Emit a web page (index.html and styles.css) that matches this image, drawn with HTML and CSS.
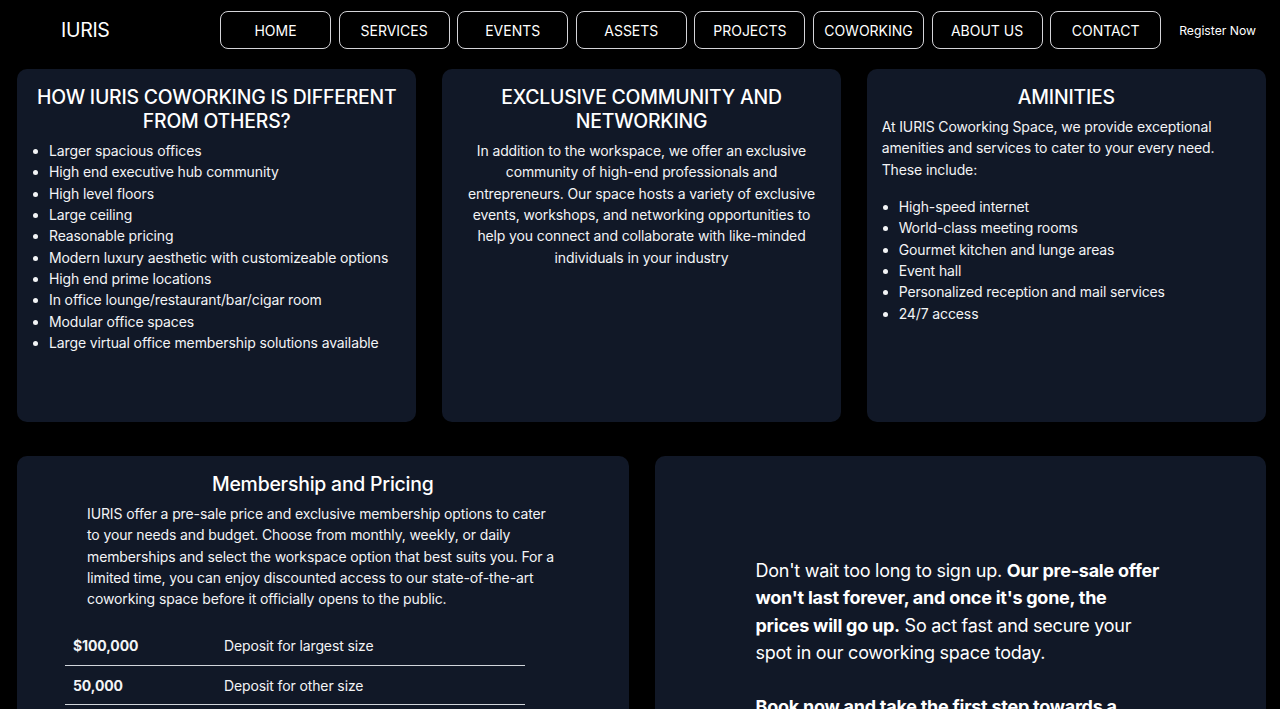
FILE: index.html
```html
<!DOCTYPE html>
<html lang="en">
<head>
<meta charset="utf-8">
<title>IURIS Coworking</title>
<link rel="stylesheet" href="styles.css">
</head>
<body>
<header class="topbar">
  <div class="logo">IURIS</div>
  <nav class="nav">
    <a class="nav-btn" href="#">HOME</a>
    <a class="nav-btn" href="#">SERVICES</a>
    <a class="nav-btn" href="#">EVENTS</a>
    <a class="nav-btn" href="#">ASSETS</a>
    <a class="nav-btn" href="#">PROJECTS</a>
    <a class="nav-btn" href="#">COWORKING</a>
    <a class="nav-btn" href="#">ABOUT US</a>
    <a class="nav-btn" href="#">CONTACT</a>
  </nav>
  <a class="register" href="#">Register Now</a>
</header>

<main class="main">
  <section class="row-three">
    <article class="card">
      <h2 class="card-title">HOW IURIS COWORKING IS DIFFERENT FROM OTHERS?</h2>
      <ul class="list">
        <li>Larger spacious offices</li>
        <li>High end executive hub community</li>
        <li>High level floors</li>
        <li>Large ceiling</li>
        <li>Reasonable pricing</li>
        <li>Modern luxury aesthetic with customizeable options</li>
        <li>High end prime locations</li>
        <li>In office lounge/restaurant/bar/cigar room</li>
        <li>Modular office spaces</li>
        <li>Large virtual office membership solutions available</li>
      </ul>
    </article>
    <article class="card">
      <h2 class="card-title">EXCLUSIVE COMMUNITY AND NETWORKING</h2>
      <p class="text center narrow">In addition to the workspace, we offer an exclusive community of high-end professionals and entrepreneurs. Our space hosts a variety of exclusive events, workshops, and networking opportunities to help you connect and collaborate with like-minded individuals in your industry</p>
    </article>
    <article class="card">
      <h2 class="card-title">AMINITIES</h2>
      <p class="text">At IURIS Coworking Space, we provide exceptional amenities and services to cater to your every need. These include:</p>
      <ul class="list list-gap">
        <li>High-speed internet</li>
        <li>World-class meeting rooms</li>
        <li>Gourmet kitchen and lunge areas</li>
        <li>Event hall</li>
        <li>Personalized reception and mail services</li>
        <li>24/7 access</li>
      </ul>
    </article>
  </section>

  <section class="row-two">
    <article class="card card-tall">
      <h2 class="card-title">Membership and Pricing</h2>
      <p class="text pricing-text">IURIS offer a pre-sale price and exclusive membership options to cater to your needs and budget. Choose from monthly, weekly, or daily memberships and select the workspace option that best suits you. For a limited time, you can enjoy discounted access to our state-of-the-art coworking space before it officially opens to the public.</p>
      <table class="price-table">
        <tr><td class="price">$100,000</td><td>Deposit for largest size</td></tr>
        <tr><td class="price">50,000</td><td>Deposit for other size</td></tr>
        <tr><td class="price">25,000</td><td>Deposit for smaller size</td></tr>
      </table>
    </article>
    <article class="card card-tall promo">
      <p class="promo-text">Don't wait too long to sign up. <strong>Our pre-sale offer won't last forever, and once it's gone, the prices will go up.</strong> So act fast and secure your spot in our coworking space today.</p>
      <p class="promo-text"><strong>Book now and take the first step towards a more productive and successful future.</strong></p>
    </article>
  </section>
</main>
</body>
</html>
```

FILE: styles.css
```css
* { box-sizing: border-box; }

html, body {
  margin: 0;
  padding: 0;
  background: #000;
  color: #f3f4f6;
  font-family: Inter, "Noto Sans", "Liberation Sans", sans-serif;
}

.topbar {
  display: flex;
  align-items: center;
  height: 60px;
  padding-left: 61px;
}

.logo {
  width: 159px;
  font-size: 19.5px;
  color: #fff;
  letter-spacing: -0.3px;
}

.nav {
  display: flex;
  gap: 7.6px;
}

.nav-btn {
  width: 111px;
  height: 38px;
  display: flex;
  align-items: center;
  justify-content: center;
  border: 1px solid #d4d4d8;
  border-radius: 8px;
  color: #fff;
  text-decoration: none;
  font-size: 14px;
}

.register {
  margin-left: 18px;
  color: #fff;
  text-decoration: none;
  font-size: 12.2px;
}

.main {
  padding: 9px 14px 0 17px;
}

.row-three {
  display: grid;
  grid-template-columns: repeat(3, 1fr);
  gap: 25.5px;
}

.row-two {
  display: grid;
  grid-template-columns: 1fr 1fr;
  gap: 26px;
  margin-top: 34px;
}

.card {
  background: #111827;
  border-radius: 10px;
  padding: 16px 15px;
  height: 353px;
}

.card-tall {
  height: 300px;
}

.card-title {
  margin: 0 0 7px;
  font-size: 19.4px;
  line-height: 24px;
  font-weight: 500;
  text-align: center;
  color: #fff;
  letter-spacing: -0.2px;
}

.text {
  margin: 0;
  font-size: 14px;
  line-height: 21.33px;
  letter-spacing: -0.12px;
  color: #f3f4f6;
}

.center { text-align: center; }

.narrow { padding: 0 7px; }

.list {
  margin: 0;
  padding-left: 17px;
  font-size: 14px;
  line-height: 21.33px;
  letter-spacing: -0.12px;
}

.list-gap { margin-top: 16px; }

.pricing-text {
  width: 471px;
  margin-left: 55px;
}

.price-table {
  margin: 17px 0 0 33px;
  width: 460px;
  border-collapse: collapse;
  font-size: 14px;
  letter-spacing: -0.12px;
}

.price-table td {
  height: 39px;
  padding: 0 8px;
  border-bottom: 1px solid #d1d5db;
  vertical-align: middle;
}

.price-table .price {
  width: 151px;
  font-weight: 700;
}

.promo {
  padding: 101px 0 0 101px;
}

.promo-text {
  width: 405px;
  margin: 0 0 27px;
  font-size: 18px;
  line-height: 27.3px;
  color: #fff;
  letter-spacing: -0.25px;
}

.promo-text strong { font-weight: 700; }
```
